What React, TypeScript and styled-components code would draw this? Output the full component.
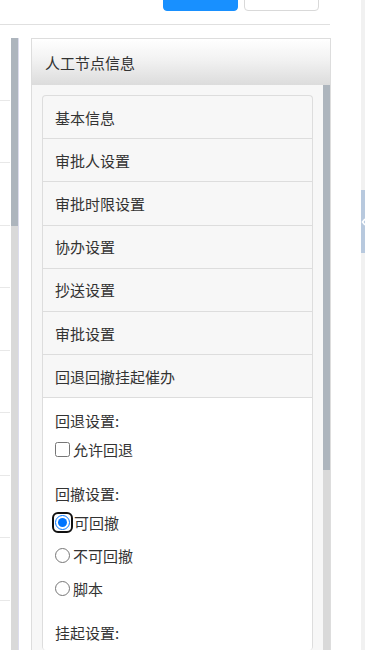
import React from "react";
import styled, { createGlobalStyle } from "styled-components";

const Global = createGlobalStyle`
  html, body { margin: 0; padding: 0; background: #fff; }
  body { font-family: "Noto Sans CJK SC", "Microsoft YaHei", "Noto Sans", sans-serif; color: #333; }
  * { box-sizing: border-box; }
`;

const Page = styled.div`
  width: 365px;
  height: 650px;
  overflow: hidden;
  display: flex;
  flex-direction: row;
  background: #fff;
`;

const Main = styled.div`
  width: 361px;
  display: flex;
  flex-direction: column;
`;

const Rail = styled.div`
  width: 4px;
  background: #f1f1f1;
  display: flex;
  flex-direction: column;
`;

const RailTab = styled.div`
  margin-top: 190px;
  height: 63px;
  width: 4px;
  background: #b8c9de;
  display: flex;
  align-items: center;
  overflow: hidden;
`;

const Toolbar = styled.div`
  width: 330px;
  height: 25px;
  border-bottom: 1px solid #e0e0e0;
  display: flex;
  justify-content: flex-end;
  align-items: flex-start;
  gap: 6px;
  padding-right: 11px;
  overflow: hidden;
`;

const Button = styled.div<{ $primary?: boolean }>`
  width: 75px;
  height: 32px;
  margin-top: -21.5px;
  border-radius: 4px;
  background: ${(p) => (p.$primary ? "#1890ff" : "#fff")};
  border: 1px solid ${(p) => (p.$primary ? "#1890ff" : "#d9d9d9")};
`;

const Body = styled.div`
  margin-top: 13px;
  display: flex;
  flex-direction: row;
  gap: 12px;
  flex: 1;
  min-height: 0;
`;

const LeftPane = styled.div`
  width: 19px;
  display: flex;
  flex-direction: row;
  border-right: 1px solid #dcdcec;
`;

const LeftList = styled.div`
  width: 11px;
  display: flex;
  flex-direction: column;
`;

const LeftRow = styled.div`
  height: 62.5px;
  flex-shrink: 0;
  width: 10px;
  border-bottom: 1px solid #e8e8e8;
`;

const Scrollbar = styled.div`
  width: 7px;
  flex-shrink: 0;
  background: #d9d9d9;
  display: flex;
  flex-direction: column;
`;

const Thumb = styled.div<{ $h: number }>`
  height: ${(p) => p.$h}px;
  background: #adb5bd;
`;

const Panel = styled.div`
  width: 300px;
  border: 1px solid #ddd;
  border-bottom: none;
  display: flex;
  flex-direction: column;
  min-height: 0;
`;

const PanelHeader = styled.div`
  height: 46px;
  flex-shrink: 0;
  background: linear-gradient(to bottom, #ffffff 0%, #f2f2f2 45%, #dcdcdc 100%);
  display: flex;
  align-items: center;
  padding-left: 13px;
  font-size: 15px;
  color: #333;
`;

const PanelBody = styled.div`
  flex: 1;
  display: flex;
  flex-direction: row;
  background: #f7f7f7;
  min-height: 0;
  overflow: hidden;
`;

const PanelContent = styled.div`
  flex: 1;
  padding: 10px 10px 0 10px;
  overflow: hidden;
`;

const Card = styled.div`
  border: 1px solid #ddd;
  border-radius: 4px;
  border-bottom: none;
  background: #f7f7f7;
  overflow: hidden;
`;

const ItemHeader = styled.div`
  height: 43.2px;
  border-bottom: 1px solid #ddd;
  display: flex;
  align-items: center;
  padding-left: 12px;
  font-size: 15px;
  color: #333;
`;

const ItemContent = styled.div`
  background: #fff;
  padding: 12px 12px 0 12px;
  display: flex;
  flex-direction: column;
  gap: 23px;
`;

const Section = styled.div`
  display: flex;
  flex-direction: column;
`;

const SectionLabel = styled.div`
  height: 22px;
  line-height: 22px;
  font-size: 15px;
  color: #333;
  margin-bottom: 6px;
`;

const Options = styled.div`
  display: flex;
  flex-direction: column;
  gap: 11px;
`;

const Option = styled.label`
  height: 22px;
  display: flex;
  align-items: center;
  font-size: 15px;
  color: #333;
`;

const Check = styled.input`
  width: 15px;
  height: 15px;
  margin: 0 3px 0 0;
  accent-color: #0075ff;
`;

const FocusRing = styled.span`
  display: inline-flex;
  align-items: center;
  justify-content: center;
  width: 21px;
  height: 21px;
  margin-left: -3px;
  margin-right: 1px;
  border: 2.5px solid #111;
  border-radius: 6px;

  & > input {
    margin: 0;
  }
`;

type Opt = { text: string; checked: boolean; focus?: boolean };

const sections: { label: string; type: string; options: Opt[] }[] = [
  { label: "回退设置:", type: "checkbox", options: [{ text: "允许回退", checked: false }] },
  {
    label: "回撤设置:",
    type: "radio",
    options: [
      { text: "可回撤", checked: true, focus: true },
      { text: "不可回撤", checked: false },
      { text: "脚本", checked: false },
    ],
  },
  { label: "挂起设置:", type: "radio", options: [] },
];

const items = ["基本信息", "审批人设置", "审批时限设置", "协办设置", "抄送设置", "审批设置", "回退回撤挂起催办"];

export default function App() {
  return (
    <>
      <Global />
      <Page>
        <Main>
          <Toolbar>
            <Button $primary />
            <Button />
          </Toolbar>
          <Body>
            <LeftPane>
              <LeftList>
                {Array.from({ length: 10 }).map((_, i) => (
                  <LeftRow key={i} />
                ))}
              </LeftList>
              <Scrollbar>
                <Thumb $h={188} />
              </Scrollbar>
            </LeftPane>
            <Panel>
              <PanelHeader>人工节点信息</PanelHeader>
              <PanelBody>
                <PanelContent>
                  <Card>
                    {items.map((t) => (
                      <ItemHeader key={t}>{t}</ItemHeader>
                    ))}
                    <ItemContent>
                      {sections.map((s) => (
                        <Section key={s.label}>
                          <SectionLabel>{s.label}</SectionLabel>
                          <Options>
                            {s.options.map((o) => {
                              const input = (
                                <Check type={s.type} name={s.label} defaultChecked={o.checked} />
                              );
                              return (
                                <Option key={o.text}>
                                  {o.focus ? <FocusRing>{input}</FocusRing> : input}
                                  {s.type === "checkbox" ? " " + o.text : o.text}
                                </Option>
                              );
                            })}
                          </Options>
                        </Section>
                      ))}
                    </ItemContent>
                  </Card>
                </PanelContent>
                <Scrollbar>
                  <Thumb $h={385} />
                </Scrollbar>
              </PanelBody>
            </Panel>
          </Body>
        </Main>
        <Rail>
          <RailTab>
            <svg width="4" height="10" viewBox="0 0 4 10">
              <path d="M4 2 L1.5 5 L4 8" stroke="#fff" strokeWidth="1.6" fill="none" />
            </svg>
          </RailTab>
        </Rail>
      </Page>
    </>
  );
}
